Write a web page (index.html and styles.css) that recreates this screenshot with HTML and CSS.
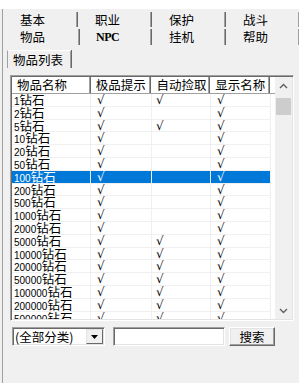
FILE: index.html
```html
<!DOCTYPE html>
<html lang="zh">
<head>
  <meta charset="UTF-8" />
  <title>物品</title>
  <link rel="stylesheet" href="styles.css">
</head>
<body>
  <div class="top"></div>
  <div class="dlg">
    <div class="tabs">
      <div class="tab">基本</div>
      <div class="tab">职业</div>
      <div class="tab">保护</div>
      <div class="tab">战斗</div>
      <div class="tab cur">物品</div>
      <div class="tab npc">NPC</div>
      <div class="tab">挂机</div>
      <div class="tab">帮助</div>
    </div>

    <div class="subtabs"><span class="subtab">物品列表</span></div>

    <div class="list">
      <div class="grid">
        <div class="head">
          <div class="th c1">物品名称</div>
          <div class="th c2">极品提示</div>
          <div class="th c3">自动捡取</div>
          <div class="th c4">显示名称</div>
          <div class="th fill"></div>
        </div>
        <div class="rows">
          <div class="row"><div class="c1"><span class="n">1</span>钻石</div><div class="c2">√</div><div class="c3">√</div><div class="c4">√</div></div>
          <div class="row"><div class="c1"><span class="n">2</span>钻石</div><div class="c2">√</div><div class="c3"></div><div class="c4">√</div></div>
          <div class="row"><div class="c1"><span class="n">5</span>钻石</div><div class="c2">√</div><div class="c3">√</div><div class="c4">√</div></div>
          <div class="row"><div class="c1"><span class="n">10</span>钻石</div><div class="c2">√</div><div class="c3"></div><div class="c4">√</div></div>
          <div class="row"><div class="c1"><span class="n">20</span>钻石</div><div class="c2">√</div><div class="c3"></div><div class="c4">√</div></div>
          <div class="row"><div class="c1"><span class="n">50</span>钻石</div><div class="c2">√</div><div class="c3"></div><div class="c4">√</div></div>
          <div class="row sel"><div class="c1"><span class="n">100</span>钻石</div><div class="c2">√</div><div class="c3"></div><div class="c4">√</div></div>
          <div class="row"><div class="c1"><span class="n">200</span>钻石</div><div class="c2">√</div><div class="c3"></div><div class="c4">√</div></div>
          <div class="row"><div class="c1"><span class="n">500</span>钻石</div><div class="c2">√</div><div class="c3"></div><div class="c4">√</div></div>
          <div class="row"><div class="c1"><span class="n">1000</span>钻石</div><div class="c2">√</div><div class="c3"></div><div class="c4">√</div></div>
          <div class="row"><div class="c1"><span class="n">2000</span>钻石</div><div class="c2">√</div><div class="c3"></div><div class="c4">√</div></div>
          <div class="row"><div class="c1"><span class="n">5000</span>钻石</div><div class="c2">√</div><div class="c3">√</div><div class="c4">√</div></div>
          <div class="row"><div class="c1"><span class="n">10000</span>钻石</div><div class="c2">√</div><div class="c3">√</div><div class="c4">√</div></div>
          <div class="row"><div class="c1"><span class="n">20000</span>钻石</div><div class="c2">√</div><div class="c3">√</div><div class="c4">√</div></div>
          <div class="row"><div class="c1"><span class="n">50000</span>钻石</div><div class="c2">√</div><div class="c3">√</div><div class="c4">√</div></div>
          <div class="row"><div class="c1"><span class="n">100000</span>钻石</div><div class="c2">√</div><div class="c3">√</div><div class="c4">√</div></div>
          <div class="row"><div class="c1"><span class="n">200000</span>钻石</div><div class="c2">√</div><div class="c3">√</div><div class="c4">√</div></div>
          <div class="row"><div class="c1"><span class="n">500000</span>钻石</div><div class="c2">√</div><div class="c3">√</div><div class="c4">√</div></div>
        </div>
      </div>
      <div class="vscroll">
        <div class="arrow">
          <svg width="9" height="6" viewBox="0 0 9 6"><path d="M1 5 L4.5 1.5 L8 5" fill="none" stroke="#606060" stroke-width="1.4"/></svg>
        </div>
        <div class="track"><div class="thumb"></div></div>
        <div class="arrow">
          <svg width="9" height="6" viewBox="0 0 9 6"><path d="M1 1 L4.5 4.5 L8 1" fill="none" stroke="#606060" stroke-width="1.4"/></svg>
        </div>
      </div>
    </div>

    <div class="search">
      <div class="combo">
        <span class="combo-text">(全部分类)</span>
        <span class="drop">
          <svg width="7" height="4" viewBox="0 0 7 4"><path d="M0 0 H7 L3.5 4 Z" fill="#000"/></svg>
        </span>
      </div>
      <div class="field"></div>
      <button type="button" class="btn">搜索</button>
    </div>
  </div>
</body>
</html>
```

FILE: styles.css
```css
html, body {
  margin: 0;
  padding: 0;
}
body {
  width: 299px;
  height: 383px;
  overflow: hidden;
  background: #f0f0f0;
  font-family: "Noto Sans CJK SC", "Liberation Sans", sans-serif;
  font-size: 12.5px;
  color: #000;
}
.top {
  height: 9px;
  background: #fff;
}
.dlg {
  margin-left: 2px;
  border-left: 1px solid #a0a0a0;
  height: 374px;
}

/* tab rows */
.tabs {
  display: grid;
  grid-template-columns: 75px 74px 74px 74px;
  grid-template-rows: 17px 18px;
  padding-top: 1px;
}
.tab {
  padding-left: 17px;
  line-height: 16px;
  box-shadow: inset -1px 0 #696969, inset -2px 0 #a0a0a0;
  margin: 2px 0 0;
}
.tab.cur {
  margin-right: -2px;
}
.npc {
  padding-left: 18px;
  font-family: "Liberation Serif", serif;
  font-weight: bold;
  font-size: 12px;
  letter-spacing: -0.5px;
}

/* sub tab */
.subtabs {
  padding: 5px 0 0 4px;
  height: 20px;
}
.subtab {
  display: inline-block;
  height: 17px;
  line-height: 17px;
  padding: 0 8px 0 5px;
  border-left: 1px solid #a0a0a0;
  border-top: 1px solid #fff;
  box-shadow: inset -1px 0 #a0a0a0, 1px 0 #696969;
}

/* list view */
.list {
  display: flex;
  margin: 5px 0 0 7px;
  width: 280px;
  height: 242px;
  border: 1px solid;
  border-color: #a0a0a0 #fff #fff #a0a0a0;
  box-shadow: inset 1px 1px #696969, inset -1px -1px #e3e3e3;
  padding: 1px;
  background: #fff;
  overflow: hidden;
}
.grid {
  width: 263px;
  overflow: hidden;
}
.head {
  display: flex;
  height: 17px;
  background: #fff;
}
.th {
  padding-left: 5px;
  line-height: 16px;
  box-sizing: border-box;
  white-space: nowrap;
  border-bottom: 1px solid #a0a0a0;
  box-shadow: inset -1px 0 #696969, inset -2px 0 #a0a0a0;
}
.th.fill {
  flex: 1;
  box-shadow: none;
}
.c1 { width: 79px; }
.c2 { width: 61px; }
.c3 { width: 59px; }
.c4 { width: 60px; }
.row {
  display: flex;
  height: 12.8px;
  line-height: 12.8px;
}
.row > div {
  box-sizing: border-box;
  border-right: 1px solid #f0f0f0;
  border-bottom: 1px solid #f0f0f0;
  white-space: nowrap;
}
.row .c1 {
  padding-left: 2px;
}
.row .c2, .row .c3, .row .c4 {
  padding-left: 6px;
  font-family: "DejaVu Sans", sans-serif;
  font-size: 12px;
  font-style: oblique;
}
.row .c3 {
  padding-left: 4px;
}
.n {
  font-family: "Liberation Sans", sans-serif;
  font-size: 10px;
}
.row.sel > div {
  background: #0078d7;
  color: #fff;
}

/* scrollbar */
.vscroll {
  width: 17px;
  display: flex;
  flex-direction: column;
  background: #f0f0f0;
}
.arrow {
  height: 17px;
  display: flex;
  align-items: center;
  justify-content: center;
}
.track {
  flex: 1;
  padding: 4px 1px 0;
}
.thumb {
  height: 17px;
  background: #cdcdcd;
}

/* search row */
.search {
  display: flex;
  align-items: flex-start;
  margin: 6px 0 0 9px;
}
.combo {
  display: flex;
  align-items: center;
  width: 93px;
  height: 19px;
  box-sizing: border-box;
  border: 1px solid;
  border-color: #a0a0a0 #fff #fff #a0a0a0;
  box-shadow: inset 1px 1px #696969, inset -1px -1px #e3e3e3;
  background: #fff;
}
.combo-text {
  flex: 1;
  padding-left: 2px;
  line-height: 17px;
}
.drop {
  width: 17px;
  height: 15px;
  box-sizing: border-box;
  margin-right: 1px;
  display: flex;
  align-items: center;
  justify-content: center;
  background: #f0f0f0;
  border: 1px solid;
  border-color: #e3e3e3 #696969 #696969 #e3e3e3;
}
.field {
  width: 112px;
  height: 19px;
  margin-left: 8px;
  box-sizing: border-box;
  border: 1px solid;
  border-color: #a0a0a0 #fff #fff #a0a0a0;
  box-shadow: inset 1px 1px #696969, inset -1px -1px #e3e3e3;
  background: #fff;
}
.btn {
  width: 46px;
  height: 19px;
  margin-left: 4px;
  padding: 0;
  font: inherit;
  line-height: 15px;
  background: #f0f0f0;
  border: 1px solid;
  border-color: #fff #696969 #696969 #fff;
  box-shadow: inset -1px -1px #a0a0a0, inset 1px 1px #e3e3e3;
}
```
